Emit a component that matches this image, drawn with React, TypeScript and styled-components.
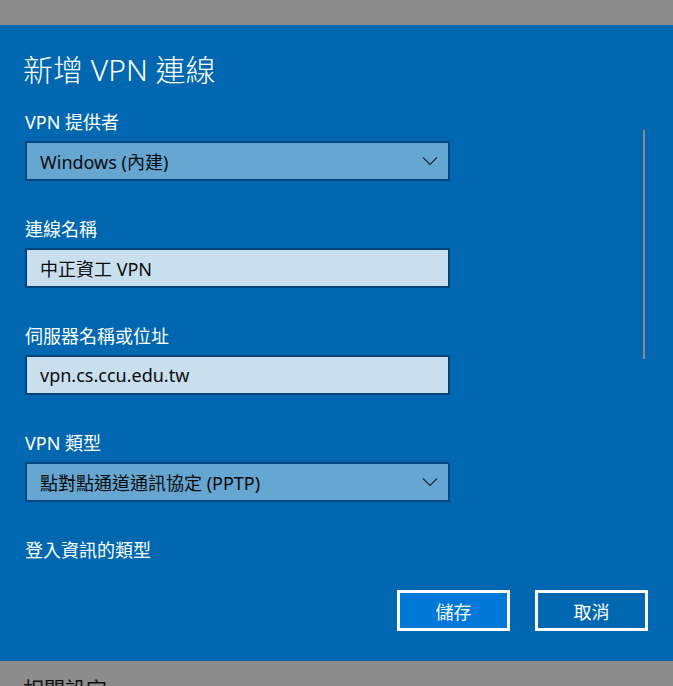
import React from "react"
import styled, { createGlobalStyle } from "styled-components"

const GlobalStyle = createGlobalStyle`
  html, body {
    margin: 0;
    padding: 0;
    height: 686px;
    overflow: hidden;
    background: #8c8c8c;
    font-family: "Noto Sans", "Noto Sans CJK TC", sans-serif;
  }
`

const Page = styled.div`
  display: flex;
  flex-direction: column;
  height: 686px;
`

const TopShade = styled.div`
  height: 25px;
  flex-shrink: 0;
  background: #8c8c8c;
`

const Dialog = styled.div`
  position: relative;
  height: 636px;
  flex-shrink: 0;
  background: #0067b0;
  padding: 25px 25px 0 23px;
  box-sizing: border-box;
  display: flex;
  flex-direction: column;
`

const Title = styled.h1`
  margin: 0 0 20px 0;
  font-size: 30px;
  line-height: 40px;
  font-weight: 300;
  color: #fff;
`

const Content = styled.div`
  display: flex;
  flex-direction: column;
  padding-left: 2px;
`

const Group = styled.div`
  display: flex;
  flex-direction: column;
  margin-bottom: 36px;
`

const Label = styled.div`
  font-size: 18px;
  line-height: 24px;
  color: #fff;
  margin-bottom: 7px;
`

const Field = styled.div<{ $select?: boolean }>`
  width: 425px;
  height: 40px;
  box-sizing: border-box;
  border: 2px solid ${(p) => (p.$select ? "#00467e" : "#004274")};
  background: ${(p) => (p.$select ? "#66a6d3" : "#c9dfee")};
  display: flex;
  align-items: center;
  justify-content: space-between;
  padding: 0 10px 0 13px;
  font-size: 18px;
  color: #0a0a0a;
`

const Chevron = () => (
  <svg width="16" height="10" viewBox="0 0 16 10">
    <path d="M1 1.5 L8 8.5 L15 1.5" fill="none" stroke="#1a2a3a" strokeWidth="1.1" />
  </svg>
)

const Scrollbar = styled.div`
  position: absolute;
  left: 643px;
  top: 105px;
  width: 2px;
  height: 229px;
  background: #8a8a8a;
`

const ButtonRow = styled.div`
  display: flex;
  justify-content: flex-end;
  gap: 25px;
  margin-top: auto;
  margin-bottom: 30px;
`

const Button = styled.button<{ $primary?: boolean }>`
  width: 113px;
  height: 41px;
  box-sizing: border-box;
  border: 3px solid #fff;
  background: ${(p) => (p.$primary ? "#0078d7" : "transparent")};
  color: #fff;
  font-family: inherit;
  font-size: 18px;
  padding: 0;
`

const Footer = styled.div`
  flex: 1;
  background: #8c8c8c;
  padding: 14px 0 0 23px;
  font-size: 21px;
  line-height: 28px;
  color: #111;
  overflow: hidden;
`

const fields = [
  { label: "VPN 提供者", value: "Windows (內建)", select: true },
  { label: "連線名稱", value: "中正資工 VPN" },
  { label: "伺服器名稱或位址", value: "vpn.cs.ccu.edu.tw" },
  { label: "VPN 類型", value: "點對點通道通訊協定 (PPTP)", select: true },
]

export default function App() {
  return (
    <>
      <GlobalStyle />
      <Page>
        <TopShade />
        <Dialog>
          <Title>新增 VPN 連線</Title>
          <Content>
            {fields.map((f) => (
              <Group key={f.label}>
                <Label>{f.label}</Label>
                <Field $select={f.select}>
                  <span>{f.value}</span>
                  {f.select && <Chevron />}
                </Field>
              </Group>
            ))}
            <Label>登入資訊的類型</Label>
          </Content>
          <Scrollbar />
          <ButtonRow>
            <Button $primary>儲存</Button>
            <Button>取消</Button>
          </ButtonRow>
        </Dialog>
        <Footer>相關設定</Footer>
      </Page>
    </>
  )
}
